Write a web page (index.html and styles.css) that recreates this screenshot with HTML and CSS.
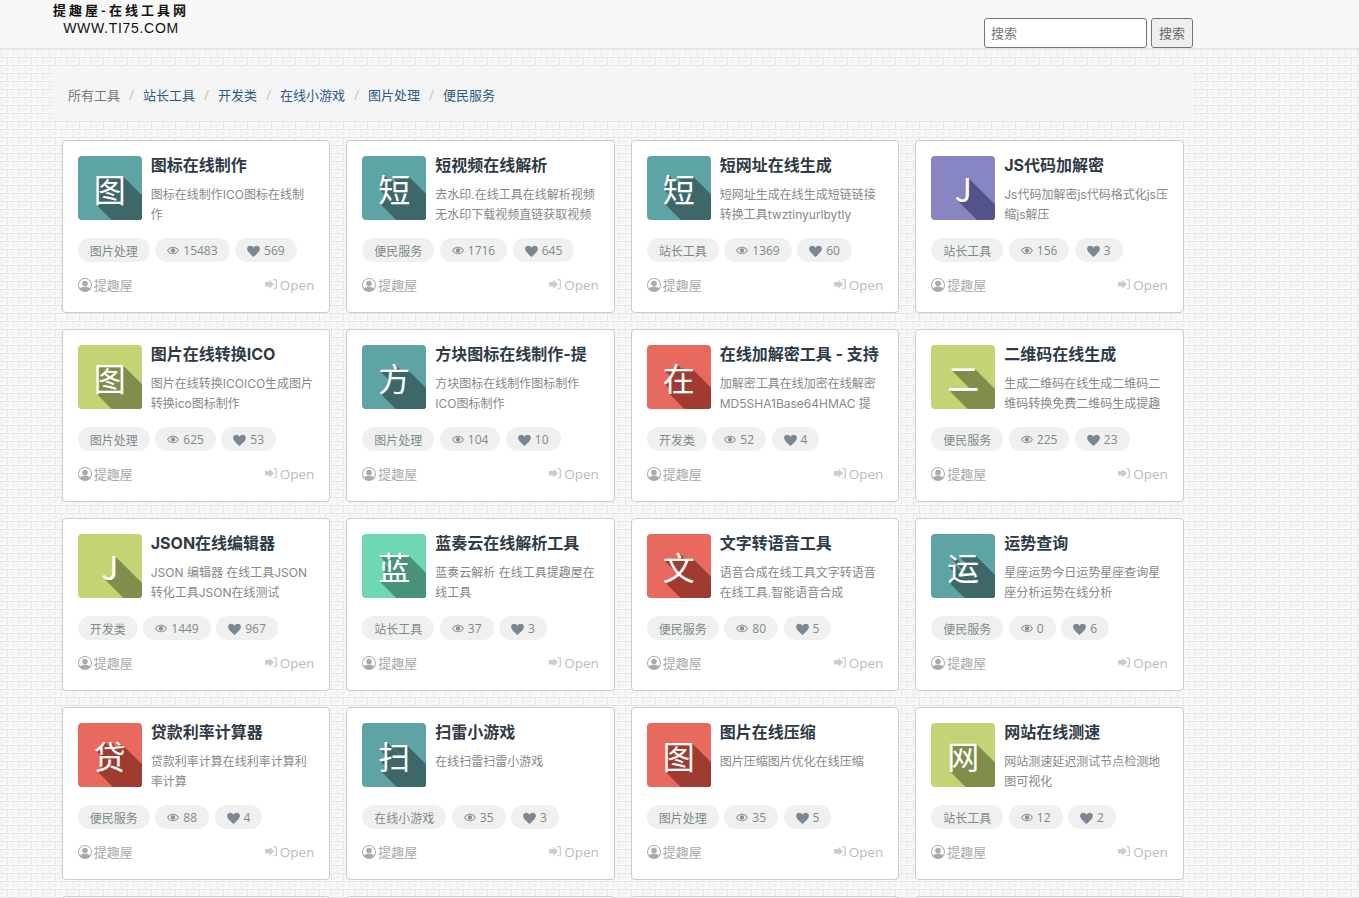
FILE: index.html
```html
<!DOCTYPE html>
<html lang="zh-CN">
<head>
<meta charset="utf-8">
<title>提趣屋-在线工具网</title>
<link rel="stylesheet" href="styles.css">
</head>
<body>
<svg class="sprite" aria-hidden="true">
  <symbol id="i-eye" viewBox="0 0 16 12"><path fill-rule="evenodd" d="M8 1C4.500 1 1.600 3.200 0 6c1.600 2.800 4.500 5 8 5s6.400-2.200 8-5c-1.600-2.800-4.500-5-8-5zm0 1.200c2.600 0 5 1.500 6.500 3.800-1.500 2.300-3.900 3.800-6.500 3.800S3 8.300 1.500 6C3 3.700 5.400 2.200 8 2.200zM8 3a3 3 0 100 6 3 3 0 000-6z"/></symbol>
  <symbol id="i-heart" viewBox="0 0 16 15"><path d="M8 15C3 10.500 0 8 0 4.800 0 2.400 1.900 1 4 1c1.700 0 3.200 1 4 2.500C8.800 2 10.300 1 12 1c2.100 0 4 1.400 4 3.800C16 8 13 10.500 8 15z"/></symbol>
  <symbol id="i-user" viewBox="0 0 16 16"><path fill-rule="evenodd" d="M8 0a8 8 0 100 16A8 8 0 008 0zm0 1.200a6.800 6.800 0 015.400 10.900C12.600 10.700 11 10 8 10s-4.600.7-5.400 2.100A6.800 6.800 0 018 1.200z"/><circle cx="8" cy="6.300" r="3.200"/><path d="M3.200 12.800C4 11.400 5.500 10.800 8 10.800s4 .6 4.800 2C11.500 14.100 9.800 14.800 8 14.800s-3.500-.7-4.800-2z"/></symbol>
  <symbol id="i-open" viewBox="0 0 16 14"><path d="M0 4h6V1l6 6-6 6v-3H0z"/><path d="M11 0h2.500A2.500 2.500 0 0116 2.500v9a2.500 2.500 0 01-2.500 2.500H11v-1.800h2.500a.7.7 0 00.7-.7v-9a.7.7 0 00-.7-.7H11z"/></symbol>
</svg>

<header class="navbar">
  <a class="logo" href="#"><span class="logo-cn">提趣屋-在线工具网</span><span class="logo-en">WWW.TI75.COM</span></a>
  <form class="search">
    <input class="search-input" type="text" placeholder="搜索">
    <button class="search-btn" type="button">搜索</button>
  </form>
</header>

<main class="page">
  <nav class="crumbs">
    <span class="crumb-current">所有工具</span><i class="sep">/</i><a href="#">站长工具</a><i class="sep">/</i><a href="#">开发类</a><i class="sep">/</i><a href="#">在线小游戏</a><i class="sep">/</i><a href="#">图片处理</a><i class="sep">/</i><a href="#">便民服务</a>
  </nav>

  <section class="grid">

    <article class="card">
      <div class="head"><div class="tile teal">图</div><div class="info"><h3>图标在线制作</h3><p>图标在线制作ICO图标在线制作</p></div></div>
      <div class="tags"><span class="pill">图片处理</span><span class="pill"><svg class="ic-eye"><use href="#i-eye"/></svg>15483</span><span class="pill"><svg class="ic-heart"><use href="#i-heart"/></svg>569</span></div>
      <div class="foot"><span class="author"><svg class="ic-user"><use href="#i-user"/></svg>提趣屋</span><a class="open" href="#"><svg class="ic-open"><use href="#i-open"/></svg>Open</a></div>
    </article>

    <article class="card">
      <div class="head"><div class="tile teal">短</div><div class="info"><h3>短视频在线解析</h3><p>去水印.在线工具在线解析视频无水印下载视频直链获取视频</p></div></div>
      <div class="tags"><span class="pill">便民服务</span><span class="pill"><svg class="ic-eye"><use href="#i-eye"/></svg>1716</span><span class="pill"><svg class="ic-heart"><use href="#i-heart"/></svg>645</span></div>
      <div class="foot"><span class="author"><svg class="ic-user"><use href="#i-user"/></svg>提趣屋</span><a class="open" href="#"><svg class="ic-open"><use href="#i-open"/></svg>Open</a></div>
    </article>

    <article class="card">
      <div class="head"><div class="tile teal">短</div><div class="info"><h3>短网址在线生成</h3><p>短网址生成在线生成短链链接转换工具twztinyurlbytly</p></div></div>
      <div class="tags"><span class="pill">站长工具</span><span class="pill"><svg class="ic-eye"><use href="#i-eye"/></svg>1369</span><span class="pill"><svg class="ic-heart"><use href="#i-heart"/></svg>60</span></div>
      <div class="foot"><span class="author"><svg class="ic-user"><use href="#i-user"/></svg>提趣屋</span><a class="open" href="#"><svg class="ic-open"><use href="#i-open"/></svg>Open</a></div>
    </article>

    <article class="card">
      <div class="head"><div class="tile purple">J</div><div class="info"><h3>JS代码加解密</h3><p>Js代码加解密js代码格式化js压缩js解压</p></div></div>
      <div class="tags"><span class="pill">站长工具</span><span class="pill"><svg class="ic-eye"><use href="#i-eye"/></svg>156</span><span class="pill"><svg class="ic-heart"><use href="#i-heart"/></svg>3</span></div>
      <div class="foot"><span class="author"><svg class="ic-user"><use href="#i-user"/></svg>提趣屋</span><a class="open" href="#"><svg class="ic-open"><use href="#i-open"/></svg>Open</a></div>
    </article>

    <article class="card">
      <div class="head"><div class="tile lime">图</div><div class="info"><h3>图片在线转换ICO</h3><p>图片在线转换ICOICO生成图片转换ico图标制作</p></div></div>
      <div class="tags"><span class="pill">图片处理</span><span class="pill"><svg class="ic-eye"><use href="#i-eye"/></svg>625</span><span class="pill"><svg class="ic-heart"><use href="#i-heart"/></svg>53</span></div>
      <div class="foot"><span class="author"><svg class="ic-user"><use href="#i-user"/></svg>提趣屋</span><a class="open" href="#"><svg class="ic-open"><use href="#i-open"/></svg>Open</a></div>
    </article>

    <article class="card">
      <div class="head"><div class="tile teal">方</div><div class="info"><h3>方块图标在线制作-提</h3><p>方块图标在线制作图标制作ICO图标制作</p></div></div>
      <div class="tags"><span class="pill">图片处理</span><span class="pill"><svg class="ic-eye"><use href="#i-eye"/></svg>104</span><span class="pill"><svg class="ic-heart"><use href="#i-heart"/></svg>10</span></div>
      <div class="foot"><span class="author"><svg class="ic-user"><use href="#i-user"/></svg>提趣屋</span><a class="open" href="#"><svg class="ic-open"><use href="#i-open"/></svg>Open</a></div>
    </article>

    <article class="card">
      <div class="head"><div class="tile red">在</div><div class="info"><h3>在线加解密工具 - 支持</h3><p>加解密工具在线加密在线解密MD5SHA1Base64HMAC 提</p></div></div>
      <div class="tags"><span class="pill">开发类</span><span class="pill"><svg class="ic-eye"><use href="#i-eye"/></svg>52</span><span class="pill"><svg class="ic-heart"><use href="#i-heart"/></svg>4</span></div>
      <div class="foot"><span class="author"><svg class="ic-user"><use href="#i-user"/></svg>提趣屋</span><a class="open" href="#"><svg class="ic-open"><use href="#i-open"/></svg>Open</a></div>
    </article>

    <article class="card">
      <div class="head"><div class="tile lime">二</div><div class="info"><h3>二维码在线生成</h3><p>生成二维码在线生成二维码二维码转换免费二维码生成提趣</p></div></div>
      <div class="tags"><span class="pill">便民服务</span><span class="pill"><svg class="ic-eye"><use href="#i-eye"/></svg>225</span><span class="pill"><svg class="ic-heart"><use href="#i-heart"/></svg>23</span></div>
      <div class="foot"><span class="author"><svg class="ic-user"><use href="#i-user"/></svg>提趣屋</span><a class="open" href="#"><svg class="ic-open"><use href="#i-open"/></svg>Open</a></div>
    </article>

    <article class="card">
      <div class="head"><div class="tile lime">J</div><div class="info"><h3>JSON在线编辑器</h3><p>JSON 编辑器 在线工具JSON转化工具JSON在线测试</p></div></div>
      <div class="tags"><span class="pill">开发类</span><span class="pill"><svg class="ic-eye"><use href="#i-eye"/></svg>1449</span><span class="pill"><svg class="ic-heart"><use href="#i-heart"/></svg>967</span></div>
      <div class="foot"><span class="author"><svg class="ic-user"><use href="#i-user"/></svg>提趣屋</span><a class="open" href="#"><svg class="ic-open"><use href="#i-open"/></svg>Open</a></div>
    </article>

    <article class="card">
      <div class="head"><div class="tile mint">蓝</div><div class="info"><h3>蓝奏云在线解析工具</h3><p>蓝奏云解析 在线工具提趣屋在线工具</p></div></div>
      <div class="tags"><span class="pill">站长工具</span><span class="pill"><svg class="ic-eye"><use href="#i-eye"/></svg>37</span><span class="pill"><svg class="ic-heart"><use href="#i-heart"/></svg>3</span></div>
      <div class="foot"><span class="author"><svg class="ic-user"><use href="#i-user"/></svg>提趣屋</span><a class="open" href="#"><svg class="ic-open"><use href="#i-open"/></svg>Open</a></div>
    </article>

    <article class="card">
      <div class="head"><div class="tile red">文</div><div class="info"><h3>文字转语音工具</h3><p>语音合成在线工具文字转语音在线工具.智能语音合成</p></div></div>
      <div class="tags"><span class="pill">便民服务</span><span class="pill"><svg class="ic-eye"><use href="#i-eye"/></svg>80</span><span class="pill"><svg class="ic-heart"><use href="#i-heart"/></svg>5</span></div>
      <div class="foot"><span class="author"><svg class="ic-user"><use href="#i-user"/></svg>提趣屋</span><a class="open" href="#"><svg class="ic-open"><use href="#i-open"/></svg>Open</a></div>
    </article>

    <article class="card">
      <div class="head"><div class="tile teal">运</div><div class="info"><h3>运势查询</h3><p>星座运势今日运势星座查询星座分析运势在线分析</p></div></div>
      <div class="tags"><span class="pill">便民服务</span><span class="pill"><svg class="ic-eye"><use href="#i-eye"/></svg>0</span><span class="pill"><svg class="ic-heart"><use href="#i-heart"/></svg>6</span></div>
      <div class="foot"><span class="author"><svg class="ic-user"><use href="#i-user"/></svg>提趣屋</span><a class="open" href="#"><svg class="ic-open"><use href="#i-open"/></svg>Open</a></div>
    </article>

    <article class="card">
      <div class="head"><div class="tile red">贷</div><div class="info"><h3>贷款利率计算器</h3><p>贷款利率计算在线利率计算利率计算</p></div></div>
      <div class="tags"><span class="pill">便民服务</span><span class="pill"><svg class="ic-eye"><use href="#i-eye"/></svg>88</span><span class="pill"><svg class="ic-heart"><use href="#i-heart"/></svg>4</span></div>
      <div class="foot"><span class="author"><svg class="ic-user"><use href="#i-user"/></svg>提趣屋</span><a class="open" href="#"><svg class="ic-open"><use href="#i-open"/></svg>Open</a></div>
    </article>

    <article class="card">
      <div class="head"><div class="tile teal">扫</div><div class="info"><h3>扫雷小游戏</h3><p>在线扫雷扫雷小游戏</p></div></div>
      <div class="tags"><span class="pill">在线小游戏</span><span class="pill"><svg class="ic-eye"><use href="#i-eye"/></svg>35</span><span class="pill"><svg class="ic-heart"><use href="#i-heart"/></svg>3</span></div>
      <div class="foot"><span class="author"><svg class="ic-user"><use href="#i-user"/></svg>提趣屋</span><a class="open" href="#"><svg class="ic-open"><use href="#i-open"/></svg>Open</a></div>
    </article>

    <article class="card">
      <div class="head"><div class="tile red">图</div><div class="info"><h3>图片在线压缩</h3><p>图片压缩图片优化在线压缩</p></div></div>
      <div class="tags"><span class="pill">图片处理</span><span class="pill"><svg class="ic-eye"><use href="#i-eye"/></svg>35</span><span class="pill"><svg class="ic-heart"><use href="#i-heart"/></svg>5</span></div>
      <div class="foot"><span class="author"><svg class="ic-user"><use href="#i-user"/></svg>提趣屋</span><a class="open" href="#"><svg class="ic-open"><use href="#i-open"/></svg>Open</a></div>
    </article>

    <article class="card">
      <div class="head"><div class="tile lime">网</div><div class="info"><h3>网站在线测速</h3><p>网站测速延迟测试节点检测地图可视化</p></div></div>
      <div class="tags"><span class="pill">站长工具</span><span class="pill"><svg class="ic-eye"><use href="#i-eye"/></svg>12</span><span class="pill"><svg class="ic-heart"><use href="#i-heart"/></svg>2</span></div>
      <div class="foot"><span class="author"><svg class="ic-user"><use href="#i-user"/></svg>提趣屋</span><a class="open" href="#"><svg class="ic-open"><use href="#i-open"/></svg>Open</a></div>
    </article>

    <article class="card"></article>
    <article class="card"></article>
    <article class="card"></article>
    <article class="card"></article>
  </section>
</main>
</body>
</html>
```
FILE: styles.css
```css
* { box-sizing: border-box; }

html { height: 898px; overflow: hidden; }

body {
  margin: 0;
  font-family: "Open Sans", "Noto Sans CJK SC", sans-serif;
  font-size: 12px;
  color: #777;
  background-color: #f7f7f7;
  background-image: url("data:image/svg+xml,%3Csvg xmlns='http://www.w3.org/2000/svg' width='12' height='16'%3E%3Crect width='12' height='16' fill='%23f8f8f8'/%3E%3Crect y='1' width='12' height='1' fill='%23e6e6e6'/%3E%3Crect y='9' width='12' height='1' fill='%23e6e6e6'/%3E%3Crect x='1' y='1' width='1' height='8' fill='%23e6e6e6'/%3E%3Crect x='7' y='9' width='1' height='7' fill='%23e6e6e6'/%3E%3Crect x='7' y='0' width='1' height='1' fill='%23e6e6e6'/%3E%3Crect x='4' y='4' width='6' height='1' fill='%23f0f0f0'/%3E%3Crect x='3' y='6' width='5' height='1' fill='%23f0f0f0'/%3E%3Crect x='10' y='12' width='2' height='1' fill='%23f0f0f0'/%3E%3Crect x='0' y='12' width='4' height='1' fill='%23f0f0f0'/%3E%3Crect x='9' y='14' width='3' height='1' fill='%23f0f0f0'/%3E%3Crect x='0' y='14' width='2' height='1' fill='%23f0f0f0'/%3E%3C/svg%3E");
}

.sprite { display: none; }

.navbar {
  display: flex;
  justify-content: space-between;
  align-items: flex-start;
  height: 49px;
  padding: 0 166px 0 53px;
  background: #f8f8f8;
  border-bottom: 1px solid #e7e7e7;
}

.logo {
  display: flex;
  flex-direction: column;
  align-items: center;
  width: 136px;
  padding-top: 1px;
  color: #111;
  text-decoration: none;
}

.logo-cn {
  font-family: "Noto Sans CJK SC", sans-serif;
  font-size: 13px;
  font-weight: 700;
  line-height: 17px;
  letter-spacing: 3px;
  white-space: nowrap;
}

.logo-en {
  margin-top: 2px;
  font-family: "Liberation Sans", sans-serif;
  font-size: 14px;
  line-height: 17px;
  letter-spacing: 0.7px;
  white-space: nowrap;
}

.search {
  display: flex;
  gap: 4px;
  margin-top: 18px;
}

.search-input {
  width: 163px;
  height: 30px;
  padding: 0 6px 2px;
  font: 13px "Noto Sans CJK SC", sans-serif;
  color: #555;
  background: #fff;
  border: 1px solid #767676;
  border-radius: 3px;
}

.search-input::placeholder { color: #757575; opacity: 1; }

.search-btn {
  width: 42px;
  height: 30px;
  padding: 0 0 2px;
  font: 13px "Noto Sans CJK SC", sans-serif;
  color: #666;
  background: #efefef;
  border: 1px solid #767676;
  border-radius: 3px;
}

.page {
  width: 1140px;
  margin: 19px 0 0 53px;
}

.crumbs {
  display: flex;
  align-items: center;
  height: 53px;
  padding: 0 15px 1px;
  font-family: "Noto Sans CJK SC", sans-serif;
  font-size: 13px;
  background: #f5f5f5;
}

.crumbs a { color: #2c5a85; text-decoration: none; }

.crumb-current { color: #777; }

.sep {
  width: 23px;
  font-family: "Open Sans", sans-serif;
  font-size: 14px;
  font-style: normal;
  text-align: center;
  color: #c4c4c4;
}

.grid {
  display: grid;
  grid-template-columns: repeat(4, 268.5px);
  gap: 16px;
  margin: 19px 0 0 8.75px;
}

.card {
  display: flex;
  flex-direction: column;
  height: 173px;
  padding: 15px;
  background: #fff;
  border: 1px solid #ccc;
  border-radius: 4px;
}

.head {
  display: flex;
  gap: 9px;
  height: 64px;
}

.tile {
  flex: none;
  display: flex;
  align-items: center;
  justify-content: center;
  width: 64px;
  height: 64px;
  overflow: hidden;
  font-family: "Noto Sans CJK SC", sans-serif;
  font-size: 32px;
  color: #fff;
  border-radius: 4px;
  text-shadow: 1px 1px var(--shade), 2px 2px var(--shade), 3px 3px var(--shade), 4px 4px var(--shade), 5px 5px var(--shade), 6px 6px var(--shade), 7px 7px var(--shade), 8px 8px var(--shade), 9px 9px var(--shade), 10px 10px var(--shade), 11px 11px var(--shade), 12px 12px var(--shade), 13px 13px var(--shade), 14px 14px var(--shade), 15px 15px var(--shade), 16px 16px var(--shade), 17px 17px var(--shade), 18px 18px var(--shade), 19px 19px var(--shade), 20px 20px var(--shade), 21px 21px var(--shade), 22px 22px var(--shade), 23px 23px var(--shade), 24px 24px var(--shade), 25px 25px var(--shade), 26px 26px var(--shade), 27px 27px var(--shade), 28px 28px var(--shade), 29px 29px var(--shade), 30px 30px var(--shade), 31px 31px var(--shade), 32px 32px var(--shade), 33px 33px var(--shade), 34px 34px var(--shade), 35px 35px var(--shade), 36px 36px var(--shade), 37px 37px var(--shade), 38px 38px var(--shade), 39px 39px var(--shade), 40px 40px var(--shade), 41px 41px var(--shade), 42px 42px var(--shade);
}

.teal { background: #5fa4a5; --shade: #3d6768; }
.red { background: #ea695e; --shade: #a03b31; }
.lime { background: #c4d475; --shade: #808e4b; }
.purple { background: #8785c2; --shade: #53538a; }
.mint { background: #6dd8b3; --shade: #47937a; }

.info { min-width: 0; flex: 1; font-family: Inter, "Noto Sans CJK SC", sans-serif; }

.info h3 {
  margin: 0;
  font-size: 16px;
  font-weight: 700;
  line-height: 18px;
  color: #2e3a46;
}

.info p {
  margin: 11px -1.5px 0 0;
  font-size: 12px;
  line-height: 20px;
  color: #888;
}

.tags {
  display: flex;
  gap: 5.5px;
  margin-top: 18px;
}

.pill {
  display: flex;
  align-items: center;
  height: 24px;
  padding: 1px 12px 0;
  color: #7b8a8b;
  background: #f0f0f0;
  border-radius: 12px;
}

.pill svg { flex: none; margin-right: 4px; fill: #7b8793; }
.pill .ic-eye { width: 12px; height: 9px; fill: #8b9399; }
.ic-heart { width: 13px; height: 12px; }

.foot {
  display: flex;
  justify-content: space-between;
  align-items: center;
  height: 20px;
  margin-top: 13px;
  font-size: 13px;
}

.author {
  display: flex;
  align-items: center;
  margin-bottom: 2px;
  color: #aaa;
  font-family: "Noto Sans CJK SC", sans-serif;
}

.ic-user { width: 14px; height: 14px; margin: 2px 2px 0 0; fill: #aaa; }

.open {
  display: flex;
  align-items: center;
  margin-bottom: 1px;
  font-size: 13.5px;
  color: #bbb;
  text-decoration: none;
}

.ic-open { width: 12px; height: 10.5px; margin-right: 3px; fill: #ccc; }
```
